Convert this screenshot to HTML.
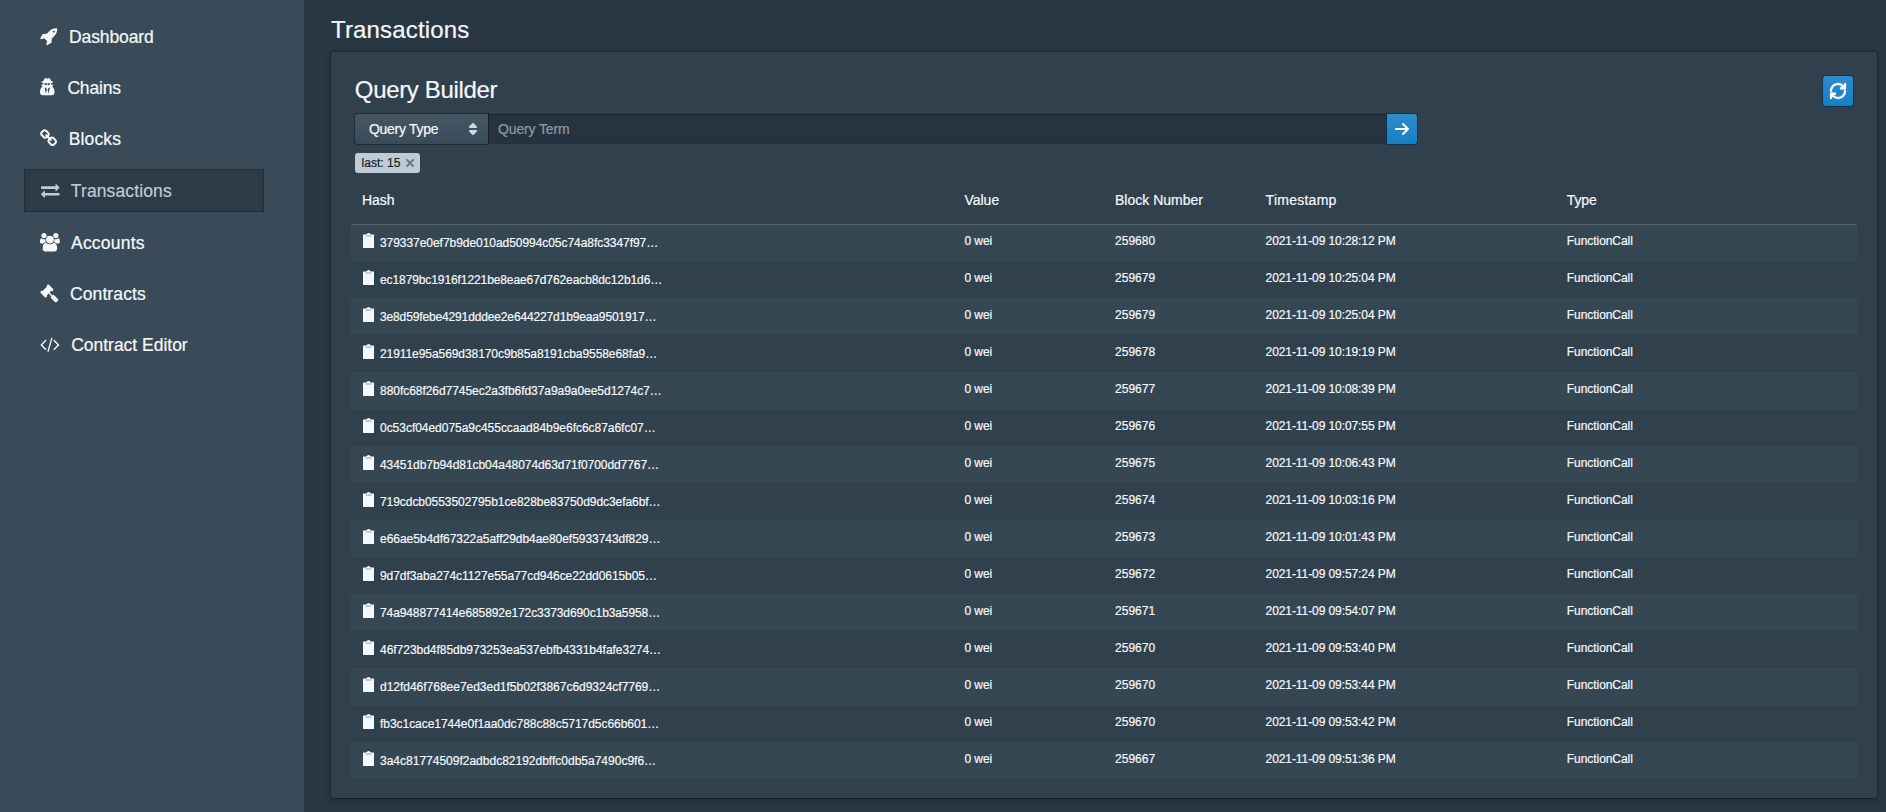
<!DOCTYPE html>
<html lang="en"><head><meta charset="utf-8"><title>Transactions</title>
<style>
*{box-sizing:border-box}
html,body{margin:0;padding:0}
body{width:1886px;height:812px;overflow:hidden;background:#293742;color:#f5f8fa;font-family:"Liberation Sans",sans-serif;font-size:14px;position:relative;-webkit-text-stroke-width:.2px}
.t{position:absolute;white-space:nowrap;display:block}
.ic{position:absolute;display:block;overflow:visible}
#side{position:absolute;left:0;top:0;width:304px;height:812px;background:#394b59}
.nav{font-size:17.5px;line-height:20px}
#active{position:absolute;left:24px;top:169px;width:240px;height:43px;background:rgba(16,22,26,.3);border:1px solid rgba(16,22,26,.35)}
h1{margin:0;font-weight:400;font-size:24px;line-height:28px}
#card{position:absolute;left:331px;top:52px;width:1546px;height:746px;background:#30404d;border-radius:3px;box-shadow:0 0 0 1px rgba(16,22,26,.32),0 1px 1px rgba(16,22,26,.3),0 2px 6px rgba(16,22,26,.35)}
#sel{position:absolute;left:24px;top:62px;width:133px;height:30px;border-radius:3px 0 0 3px;background:#394b59 linear-gradient(to bottom,rgba(255,255,255,.07),rgba(255,255,255,0));box-shadow:0 0 0 1px rgba(16,22,26,.45);font-size:14px;line-height:30px}
#inp{position:absolute;left:157px;top:62px;width:899px;height:30px;background:rgba(16,22,26,.27);box-shadow:inset 0 1px 1px rgba(16,22,26,.4),inset 0 0 0 1px rgba(16,22,26,.15);color:#8a9ba8;font-size:14px;line-height:30px}
.btn{position:absolute;width:30px;height:30px;background:#167fc5 linear-gradient(to bottom,rgba(255,255,255,.1),rgba(255,255,255,0));box-shadow:0 0 0 1px #10344f}
#go{left:1056px;top:62px;border-radius:0 3px 3px 0}
#ref{left:1492px;top:24px;border-radius:3px}
#tag{position:absolute;left:24px;top:101px;width:65px;height:20px;border-radius:3px;background:#bfccd6;color:#182026;font-size:12px;line-height:20px}
table{position:absolute;left:20px;top:132px;width:1506px;border-collapse:collapse;border-spacing:0;table-layout:fixed}
th{height:40px;padding:0 11px;text-align:left;font-weight:400;font-size:14px;line-height:18px;vertical-align:top;padding-top:7px;color:#f5f8fa}
td{height:37px;padding:10px 11px 12px 11px;font-size:12px;line-height:15px;vertical-align:top;white-space:nowrap;overflow:hidden;color:#f5f8fa}
tbody tr:nth-child(odd) td{background:rgba(92,112,128,.15)}
tbody tr:first-child td{box-shadow:inset 0 1px 0 0 rgba(255,255,255,.15)}
td span,th span{position:relative;top:0px}
td.h{position:relative;padding-left:29px}
td.h span{top:2px}
.clip{position:absolute;left:12.1px;top:9.4px}
</style></head><body>
<div id="side">
<div id="active"></div>
<svg class="ic" style="left:40px;top:27.4px" width="17.179" height="18.5" viewBox="0 -1536 1664 1792"><path fill="#f5f8fa" transform="scale(1,-1)" d="M1412.0 1020.0Q1440 1048 1440.0 1088.0Q1440 1128 1412.0 1156.0Q1384 1184 1344.0 1184.0Q1304 1184 1276.0 1156.0Q1248 1128 1248.0 1088.0Q1248 1048 1276.0 1020.0Q1304 992 1344.0 992.0Q1384 992 1412.0 1020.0ZM1664 1376Q1664 1127 1588.5 945.5Q1513 764 1335 585Q1254 505 1140 409L1120 30Q1118 14 1104 4L720 -220Q713 -224 704 -224Q692 -224 681 -215L617 -151Q604 -137 609 -119L694 157L413 438L137 353Q134 352 128 352Q114 352 105 361L41 425Q24 444 36 464L260 848Q270 862 286 864L665 884Q761 998 841 1079Q1029 1266 1199.0 1337.0Q1369 1408 1630 1408Q1644 1408 1654.0 1398.5Q1664 1389 1664 1376Z"/></svg>
<span class="t nav" style="left:69.0px;top:26.94px;color:#f5f8fa;letter-spacing:-0.108px">Dashboard</span>
<svg class="ic" style="left:40px;top:78.3px" width="15.857" height="18.5" viewBox="0 -1536 1536 1792"><path fill="#f5f8fa" transform="scale(1,-1)" d="M576 0 672 448 576 576 448 640ZM832 0 960 640 832 576 736 448ZM992 1010Q990 1014 988 1016Q978 1024 892 1024Q822 1024 725 1005Q718 1003 704.0 1003.0Q690 1003 683 1005Q586 1024 516 1024Q430 1024 420 1016Q418 1014 416 1010Q418 992 420 983Q422 980 427.5 976.5Q433 973 435 966Q437 962 442.5 945.5Q448 929 449.5 925.0Q451 921 457.0 908.0Q463 895 465.5 891.0Q468 887 474.5 877.0Q481 867 486.5 863.5Q492 860 500.5 854.0Q509 848 518.0 846.0Q527 844 538.5 842.0Q550 840 563 840Q599 840 622.0 852.5Q645 865 654.5 882.5Q664 900 669.0 917.0Q674 934 680.5 946.5Q687 959 698 959H710Q721 959 727.5 946.5Q734 934 739.0 917.0Q744 900 753.5 882.5Q763 865 786.0 852.5Q809 840 845 840Q858 840 869.5 842.0Q881 844 890.0 846.0Q899 848 907.5 854.0Q916 860 921.5 863.5Q927 867 933.5 877.0Q940 887 942.5 891.0Q945 895 951.0 908.0Q957 921 958.5 925.0Q960 929 965.5 945.5Q971 962 973 966Q975 973 980.5 976.5Q986 980 988 983Q990 992 992 1010ZM1408 131Q1408 10 1335.0 -59.0Q1262 -128 1141 -128H267Q146 -128 73.0 -59.0Q0 10 0 131Q0 192 4.5 249.0Q9 306 23.5 374.5Q38 443 61.0 498.0Q84 553 124.5 601.5Q165 650 218 676L128 896H342Q320 960 320 1024Q320 1036 322 1056Q128 1096 128 1152Q128 1209 338 1251Q355 1313 389.5 1385.0Q424 1457 460 1499Q492 1536 536 1536Q566 1536 620.0 1505.0Q674 1474 704.0 1474.0Q734 1474 788.0 1505.0Q842 1536 872 1536Q916 1536 948 1499Q984 1457 1018.5 1385.0Q1053 1313 1070 1251Q1280 1209 1280 1152Q1280 1096 1086 1056Q1093 975 1066 896H1280L1198 671Q1261 638 1305.5 574.5Q1350 511 1371.0 431.0Q1392 351 1400.0 279.5Q1408 208 1408 131Z"/></svg>
<span class="t nav" style="left:67.4px;top:77.84px;color:#f5f8fa;letter-spacing:-0.162px">Chains</span>
<svg class="ic" style="left:40px;top:129.2px" width="17.179" height="18.5" viewBox="0 -1536 1664 1792"><path fill="#f5f8fa" transform="scale(1,-1)" d="M1456 320Q1456 360 1428 388L1220 596Q1192 624 1152 624Q1110 624 1080 592Q1083 589 1099.0 573.5Q1115 558 1120.5 552.0Q1126 546 1135.5 533.0Q1145 520 1148.5 507.5Q1152 495 1152 480Q1152 440 1124.0 412.0Q1096 384 1056 384Q1041 384 1028.5 387.5Q1016 391 1003.0 400.5Q990 410 984.0 415.5Q978 421 962.5 437.0Q947 453 944 456Q911 425 911 383Q911 343 939 315L1145 108Q1172 81 1213 81Q1253 81 1281 107L1428 253Q1456 281 1456 320ZM753 1025Q753 1065 725 1093L519 1300Q491 1328 451 1328Q412 1328 383 1301L236 1155Q208 1127 208 1088Q208 1048 236 1020L444 812Q471 785 512 785Q554 785 584 816Q581 819 565.0 834.5Q549 850 543.5 856.0Q538 862 528.5 875.0Q519 888 515.5 900.5Q512 913 512 928Q512 968 540.0 996.0Q568 1024 608 1024Q623 1024 635.5 1020.5Q648 1017 661.0 1007.5Q674 998 680.0 992.5Q686 987 701.5 971.0Q717 955 720 952Q753 983 753 1025ZM1563 117 1416 -29Q1333 -112 1213 -112Q1092 -112 1009 -27L803 180Q720 263 720 383Q720 506 808 592L720 680Q634 592 512 592Q392 592 308 676L100 884Q16 968 16.0 1088.0Q16 1208 101 1291L248 1437Q331 1520 451 1520Q572 1520 655 1435L861 1228Q944 1145 944 1025Q944 902 856 816L944 728Q1030 816 1152 816Q1272 816 1356 732L1564 524Q1648 440 1648.0 320.0Q1648 200 1563 117Z"/></svg>
<span class="t nav" style="left:68.8px;top:128.74px;color:#f5f8fa;letter-spacing:0.110px">Blocks</span>
<svg class="ic" style="left:41px;top:181.1px" width="18.500" height="18.5" viewBox="0 -1536 1792 1792"><path fill="#bfccd6" transform="scale(1,-1)" d="M1792 352V160Q1792 147 1782.5 137.5Q1773 128 1760 128H384V-64Q384 -77 374.5 -86.5Q365 -96 352 -96Q340 -96 328 -86L9 234Q0 243 0 256Q0 270 9 279L329 599Q338 608 352 608Q365 608 374.5 598.5Q384 589 384 576V384H1760Q1773 384 1782.5 374.5Q1792 365 1792 352ZM1783 873 1463 553Q1454 544 1440 544Q1427 544 1417.5 553.5Q1408 563 1408 576V768H32Q19 768 9.5 777.5Q0 787 0 800V992Q0 1005 9.5 1014.5Q19 1024 32 1024H1408V1216Q1408 1230 1417.0 1239.0Q1426 1248 1440 1248Q1452 1248 1464 1238L1783 919Q1792 910 1792.0 896.0Q1792 882 1783 873Z"/></svg>
<span class="t nav" style="left:70.8px;top:180.64px;color:#bfccd6;letter-spacing:0.118px">Transactions</span>
<svg class="ic" style="left:40px;top:233.0px" width="19.821" height="18.5" viewBox="0 -1536 1920 1792"><path fill="#f5f8fa" transform="scale(1,-1)" d="M593 640Q431 635 328 512H194Q112 512 56.0 552.5Q0 593 0 671Q0 1024 124 1024Q130 1024 167.5 1003.0Q205 982 265.0 960.5Q325 939 384 939Q451 939 517 962Q512 925 512 896Q512 757 593 640ZM1664 3Q1664 -117 1591.0 -186.5Q1518 -256 1397 -256H523Q402 -256 329.0 -186.5Q256 -117 256 3Q256 56 259.5 106.5Q263 157 273.5 215.5Q284 274 300.0 324.0Q316 374 343.0 421.5Q370 469 405.0 502.5Q440 536 490.5 556.0Q541 576 602 576Q612 576 645.0 554.5Q678 533 718.0 506.5Q758 480 825.0 458.5Q892 437 960.0 437.0Q1028 437 1095.0 458.5Q1162 480 1202.0 506.5Q1242 533 1275.0 554.5Q1308 576 1318 576Q1379 576 1429.5 556.0Q1480 536 1515.0 502.5Q1550 469 1577.0 421.5Q1604 374 1620.0 324.0Q1636 274 1646.5 215.5Q1657 157 1660.5 106.5Q1664 56 1664 3ZM565.0 1461.0Q640 1386 640.0 1280.0Q640 1174 565.0 1099.0Q490 1024 384.0 1024.0Q278 1024 203.0 1099.0Q128 1174 128.0 1280.0Q128 1386 203.0 1461.0Q278 1536 384.0 1536.0Q490 1536 565.0 1461.0ZM1231.5 1167.5Q1344 1055 1344.0 896.0Q1344 737 1231.5 624.5Q1119 512 960.0 512.0Q801 512 688.5 624.5Q576 737 576.0 896.0Q576 1055 688.5 1167.5Q801 1280 960.0 1280.0Q1119 1280 1231.5 1167.5ZM1920 671Q1920 593 1864.0 552.5Q1808 512 1726 512H1592Q1489 635 1327 640Q1408 757 1408 896Q1408 925 1403 962Q1469 939 1536 939Q1595 939 1655.0 960.5Q1715 982 1752.5 1003.0Q1790 1024 1796 1024Q1920 1024 1920 671ZM1717.0 1461.0Q1792 1386 1792.0 1280.0Q1792 1174 1717.0 1099.0Q1642 1024 1536.0 1024.0Q1430 1024 1355.0 1099.0Q1280 1174 1280.0 1280.0Q1280 1386 1355.0 1461.0Q1430 1536 1536.0 1536.0Q1642 1536 1717.0 1461.0Z"/></svg>
<span class="t nav" style="left:71.0px;top:232.54px;color:#f5f8fa;letter-spacing:0.225px">Accounts</span>
<svg class="ic" style="left:40px;top:284.3px" width="18.500" height="18.5" viewBox="0 -1536 1792 1792"><path fill="#f5f8fa" transform="scale(1,-1)" d="M1771 0Q1771 -53 1734 -90L1627 -198Q1588 -235 1536 -235Q1483 -235 1446 -198L1083 166Q1045 202 1045 256Q1045 309 1088 352L832 608L706 482Q692 468 672.0 468.0Q652 468 638 482Q640 480 650.5 470.0Q661 460 663.0 457.0Q665 454 673.0 445.5Q681 437 683.0 432.0Q685 427 689.0 418.5Q693 410 694.5 402.0Q696 394 696 384Q696 346 668 316Q665 313 651.5 298.0Q638 283 632.5 277.5Q627 272 614.0 261.0Q601 250 592.0 245.5Q583 241 570.0 236.5Q557 232 544 232Q504 232 476 260L68 668Q40 696 40 736Q40 749 44.5 762.0Q49 775 53.5 784.0Q58 793 69.0 806.0Q80 819 85.5 824.5Q91 830 106.0 843.5Q121 857 124 860Q154 888 192 888Q202 888 210.0 886.5Q218 885 226.5 881.0Q235 877 240.0 875.0Q245 873 253.5 865.0Q262 857 265.0 855.0Q268 853 278.0 842.5Q288 832 290 830Q276 844 276.0 864.0Q276 884 290 898L638 1246Q652 1260 672.0 1260.0Q692 1260 706 1246Q704 1248 693.5 1258.0Q683 1268 681.0 1271.0Q679 1274 671.0 1282.5Q663 1291 661.0 1296.0Q659 1301 655.0 1309.5Q651 1318 649.5 1326.0Q648 1334 648 1344Q648 1382 676 1412Q679 1415 692.5 1430.0Q706 1445 711.5 1450.5Q717 1456 730.0 1467.0Q743 1478 752.0 1482.5Q761 1487 774.0 1491.5Q787 1496 800 1496Q840 1496 868 1468L1276 1060Q1304 1032 1304 992Q1304 979 1299.5 966.0Q1295 953 1290.5 944.0Q1286 935 1275.0 922.0Q1264 909 1258.5 903.5Q1253 898 1238.0 884.5Q1223 871 1220 868Q1190 840 1152 840Q1142 840 1134.0 841.5Q1126 843 1117.5 847.0Q1109 851 1104.0 853.0Q1099 855 1090.5 863.0Q1082 871 1079.0 873.0Q1076 875 1066.0 885.5Q1056 896 1054 898Q1068 884 1068.0 864.0Q1068 844 1054 830L928 704L1184 448Q1227 491 1280 491Q1332 491 1371 454L1734 91Q1771 52 1771 0Z"/></svg>
<span class="t nav" style="left:70.0px;top:283.84px;color:#f5f8fa;letter-spacing:0.100px">Contracts</span>
<svg class="ic" style="left:40px;top:335.2px" width="19.821" height="18.5" viewBox="0 -1536 1920 1792"><path fill="#f5f8fa" transform="scale(1,-1)" d="M617 137 567 87Q557 77 544.0 77.0Q531 77 521 87L55 553Q45 563 45.0 576.0Q45 589 55 599L521 1065Q531 1075 544.0 1075.0Q557 1075 567 1065L617 1015Q627 1005 627.0 992.0Q627 979 617 969L224 576L617 183Q627 173 627.0 160.0Q627 147 617 137ZM1208 1204 835 -87Q831 -100 819.5 -106.5Q808 -113 796 -109L734 -92Q721 -88 714.5 -76.5Q708 -65 712 -52L1085 1239Q1089 1252 1100.5 1258.5Q1112 1265 1124 1261L1186 1244Q1199 1240 1205.5 1228.5Q1212 1217 1208 1204ZM1865 553 1399 87Q1389 77 1376.0 77.0Q1363 77 1353 87L1303 137Q1293 147 1293.0 160.0Q1293 173 1303 183L1696 576L1303 969Q1293 979 1293.0 992.0Q1293 1005 1303 1015L1353 1065Q1363 1075 1376.0 1075.0Q1389 1075 1399 1065L1865 599Q1875 589 1875.0 576.0Q1875 563 1865 553Z"/></svg>
<span class="t nav" style="left:71.2px;top:334.74px;color:#f5f8fa;letter-spacing:-0.016px">Contract Editor</span>
</div>
<h1 class="t" style="left:331px;top:16.28px;letter-spacing:0.161px">Transactions</h1>
<div id="card">
<h1 class="t" style="left:23.80000000000001px;top:24.18px;letter-spacing:-0.335px">Query Builder</h1>
<div id="ref" class="btn"><svg class="ic" style="left:7px;top:7px" width="16" height="16" viewBox="0 0 16 16"><path fill="#fff" stroke="#fff" stroke-width=".3" d="M14.99 6.990c-.55 0-1 .45-1 1 0 3.310-2.690 6-6 6-1.770 0-3.360-.78-4.460-2h1.460c.55 0 1-.45 1-1s-.45-1-1-1h-4c-.55 0-1 .45-1 1v4c0 .55.45 1 1 1s1-.45 1-1v-1.740a7.950 7.950 0 0 0 6 2.740c4.420 0 8-3.580 8-8 0-.55-.45-1-1-1zm0-7c-.55 0-1 .45-1 1v1.740a7.950 7.950 0 0 0-6-2.740c-4.420 0-8 3.580-8 8 0 .55.45 1 1 1s1-.45 1-1c0-3.310 2.690-6 6-6 1.770 0 3.360.78 4.460 2h-1.460c-.55 0-1 .45-1 1s.45 1 1 1h4c.55 0 1-.45 1-1v-4c0-.55-.45-1-1-1z"/><path fill="#fff" d="M15.800.4V6.500H9.700ZM.2 15.600V9.500H6.300Z"/></svg></div>
<div id="sel"><span class="t" style="left:14px;top:0;letter-spacing:-0.288px">Query Type</span><svg class="ic" style="left:110px;top:7px" width="16" height="16" viewBox="0 0 16 16"><path fill="#ced9e0" d="M5 7h6a1.003 1.003 0 0 0 .71-1.710l-3-3C8.530 2.110 8.280 2 8 2s-.53.11-.71.290l-3 3A1.003 1.003 0 0 0 5 7zm6 2H5a1.003 1.003 0 0 0-.71 1.710l3 3c.18.180.43.290.71.290s.53-.11.71-.290l3-3A1.003 1.003 0 0 0 11 9z"/></svg></div>
<div id="inp"><span class="t" style="left:10px;top:0;letter-spacing:-0.129px">Query Term</span></div>
<div id="go" class="btn"><svg class="ic" style="left:7px;top:7px" width="16" height="16" viewBox="0 0 16 16"><path fill="#fff" d="M14.700 7.290l-5-5a.965.965 0 0 0-.71-.3 1.003 1.003 0 0 0-.71 1.710l3.300 3.290H1.990c-.55 0-1 .45-1 1s.45 1 1 1h9.590l-3.290 3.290a1.003 1.003 0 0 0 1.420 1.420l5-5c.18-.18.29-.43.29-.71s-.12-.52-.3-.7z"/></svg></div>
<div id="tag"><span class="t" style="left:6.5px;top:0;letter-spacing:0.031px">last: 15</span><svg class="ic" style="left:47px;top:2px" width="16" height="16" viewBox="0 0 16 16"><path fill="#687b8a" d="M9.410 8l2.290-2.290c.19-.18.3-.43.3-.71a1.003 1.003 0 0 0-1.710-.71L8 6.590l-2.290-2.300a1.003 1.003 0 0 0-1.420 1.420L6.590 8 4.300 10.290c-.19.180-.3.430-.3.710a1.003 1.003 0 0 0 1.710.71L8 9.410l2.290 2.290c.18.190.43.3.71.300a1.003 1.003 0 0 0 .71-1.710L9.410 8z"/></svg></div>
<table><colgroup><col style="width:40%"><col style="width:10%"><col style="width:10%"><col style="width:20%"><col style="width:20%"></colgroup>
<thead><tr><th><span style="letter-spacing:-0.036px">Hash</span></th><th><span style="letter-spacing:-0.001px">Value</span></th><th><span style="letter-spacing:0.008px">Block Number</span></th><th><span style="letter-spacing:0.256px">Timestamp</span></th><th><span style="letter-spacing:-0.145px">Type</span></th></tr></thead>
<tbody>
<tr><td class="h"><svg class="clip" width="11.1" height="14.9" viewBox="0 0 11.1 14.9"><path fill="#f5f8fa" fill-rule="evenodd" d="M.6 1.500H3.100L4.700.25Q5.550-.15 6.400.25L8 1.500H10.500Q11.100 1.500 11.100 2.100V14.300Q11.100 14.900 10.500 14.900H.6Q0 14.900 0 14.300V2.100Q0 1.500.6 1.500ZM2.600 2.700H8.500V3.200H2.600Z"/></svg><span style="letter-spacing:-0.050px">379337e0ef7b9de010ad50994c05c74a8fc3347f97…</span></td><td><span style="letter-spacing:-0.038px">0 wei</span></td><td><span style="letter-spacing:0.023px">259680</span></td><td><span style="letter-spacing:-0.087px">2021-11-09 10:28:12 PM</span></td><td><span style="letter-spacing:-0.054px">FunctionCall</span></td></tr>
<tr><td class="h"><svg class="clip" width="11.1" height="14.9" viewBox="0 0 11.1 14.9"><path fill="#f5f8fa" fill-rule="evenodd" d="M.6 1.500H3.100L4.700.25Q5.550-.15 6.400.25L8 1.500H10.500Q11.100 1.500 11.100 2.100V14.300Q11.100 14.900 10.500 14.900H.6Q0 14.900 0 14.300V2.100Q0 1.500.6 1.500ZM2.600 2.700H8.500V3.200H2.600Z"/></svg><span style="letter-spacing:-0.096px">ec1879bc1916f1221be8eae67d762eacb8dc12b1d6…</span></td><td><span style="letter-spacing:-0.038px">0 wei</span></td><td><span style="letter-spacing:0.023px">259679</span></td><td><span style="letter-spacing:-0.087px">2021-11-09 10:25:04 PM</span></td><td><span style="letter-spacing:-0.054px">FunctionCall</span></td></tr>
<tr><td class="h"><svg class="clip" width="11.1" height="14.9" viewBox="0 0 11.1 14.9"><path fill="#f5f8fa" fill-rule="evenodd" d="M.6 1.500H3.100L4.700.25Q5.550-.15 6.400.25L8 1.500H10.500Q11.100 1.500 11.100 2.100V14.300Q11.100 14.900 10.500 14.900H.6Q0 14.900 0 14.300V2.100Q0 1.500.6 1.500ZM2.600 2.700H8.500V3.200H2.600Z"/></svg><span style="letter-spacing:-0.139px">3e8d59febe4291dddee2e644227d1b9eaa9501917…</span></td><td><span style="letter-spacing:-0.038px">0 wei</span></td><td><span style="letter-spacing:0.023px">259679</span></td><td><span style="letter-spacing:-0.087px">2021-11-09 10:25:04 PM</span></td><td><span style="letter-spacing:-0.054px">FunctionCall</span></td></tr>
<tr><td class="h"><svg class="clip" width="11.1" height="14.9" viewBox="0 0 11.1 14.9"><path fill="#f5f8fa" fill-rule="evenodd" d="M.6 1.500H3.100L4.700.25Q5.550-.15 6.400.25L8 1.500H10.500Q11.100 1.500 11.100 2.100V14.300Q11.100 14.900 10.500 14.900H.6Q0 14.900 0 14.300V2.100Q0 1.500.6 1.500ZM2.600 2.700H8.500V3.200H2.600Z"/></svg><span style="letter-spacing:-0.071px">21911e95a569d38170c9b85a8191cba9558e68fa9…</span></td><td><span style="letter-spacing:-0.038px">0 wei</span></td><td><span style="letter-spacing:0.023px">259678</span></td><td><span style="letter-spacing:-0.087px">2021-11-09 10:19:19 PM</span></td><td><span style="letter-spacing:-0.054px">FunctionCall</span></td></tr>
<tr><td class="h"><svg class="clip" width="11.1" height="14.9" viewBox="0 0 11.1 14.9"><path fill="#f5f8fa" fill-rule="evenodd" d="M.6 1.500H3.100L4.700.25Q5.550-.15 6.400.25L8 1.500H10.500Q11.100 1.500 11.100 2.100V14.300Q11.100 14.900 10.500 14.900H.6Q0 14.900 0 14.300V2.100Q0 1.500.6 1.500ZM2.600 2.700H8.500V3.200H2.600Z"/></svg><span style="letter-spacing:-0.043px">880fc68f26d7745ec2a3fb6fd37a9a9a0ee5d1274c7…</span></td><td><span style="letter-spacing:-0.038px">0 wei</span></td><td><span style="letter-spacing:0.023px">259677</span></td><td><span style="letter-spacing:-0.087px">2021-11-09 10:08:39 PM</span></td><td><span style="letter-spacing:-0.054px">FunctionCall</span></td></tr>
<tr><td class="h"><svg class="clip" width="11.1" height="14.9" viewBox="0 0 11.1 14.9"><path fill="#f5f8fa" fill-rule="evenodd" d="M.6 1.500H3.100L4.700.25Q5.550-.15 6.400.25L8 1.500H10.500Q11.100 1.500 11.100 2.100V14.300Q11.100 14.900 10.500 14.900H.6Q0 14.900 0 14.300V2.100Q0 1.500.6 1.500ZM2.600 2.700H8.500V3.200H2.600Z"/></svg><span style="letter-spacing:-0.029px">0c53cf04ed075a9c455ccaad84b9e6fc6c87a6fc07…</span></td><td><span style="letter-spacing:-0.038px">0 wei</span></td><td><span style="letter-spacing:0.023px">259676</span></td><td><span style="letter-spacing:-0.087px">2021-11-09 10:07:55 PM</span></td><td><span style="letter-spacing:-0.054px">FunctionCall</span></td></tr>
<tr><td class="h"><svg class="clip" width="11.1" height="14.9" viewBox="0 0 11.1 14.9"><path fill="#f5f8fa" fill-rule="evenodd" d="M.6 1.500H3.100L4.700.25Q5.550-.15 6.400.25L8 1.500H10.500Q11.100 1.500 11.100 2.100V14.300Q11.100 14.900 10.500 14.900H.6Q0 14.900 0 14.300V2.100Q0 1.500.6 1.500ZM2.600 2.700H8.500V3.200H2.600Z"/></svg><span style="letter-spacing:-0.062px">43451db7b94d81cb04a48074d63d71f0700dd7767…</span></td><td><span style="letter-spacing:-0.038px">0 wei</span></td><td><span style="letter-spacing:0.023px">259675</span></td><td><span style="letter-spacing:-0.087px">2021-11-09 10:06:43 PM</span></td><td><span style="letter-spacing:-0.054px">FunctionCall</span></td></tr>
<tr><td class="h"><svg class="clip" width="11.1" height="14.9" viewBox="0 0 11.1 14.9"><path fill="#f5f8fa" fill-rule="evenodd" d="M.6 1.500H3.100L4.700.25Q5.550-.15 6.400.25L8 1.500H10.500Q11.100 1.500 11.100 2.100V14.300Q11.100 14.900 10.500 14.900H.6Q0 14.900 0 14.300V2.100Q0 1.500.6 1.500ZM2.600 2.700H8.500V3.200H2.600Z"/></svg><span style="letter-spacing:-0.055px">719cdcb0553502795b1ce828be83750d9dc3efa6bf…</span></td><td><span style="letter-spacing:-0.038px">0 wei</span></td><td><span style="letter-spacing:0.023px">259674</span></td><td><span style="letter-spacing:-0.087px">2021-11-09 10:03:16 PM</span></td><td><span style="letter-spacing:-0.054px">FunctionCall</span></td></tr>
<tr><td class="h"><svg class="clip" width="11.1" height="14.9" viewBox="0 0 11.1 14.9"><path fill="#f5f8fa" fill-rule="evenodd" d="M.6 1.500H3.100L4.700.25Q5.550-.15 6.400.25L8 1.500H10.500Q11.100 1.500 11.100 2.100V14.300Q11.100 14.900 10.500 14.900H.6Q0 14.900 0 14.300V2.100Q0 1.500.6 1.500ZM2.600 2.700H8.500V3.200H2.600Z"/></svg><span style="letter-spacing:-0.037px">e66ae5b4df67322a5aff29db4ae80ef5933743df829…</span></td><td><span style="letter-spacing:-0.038px">0 wei</span></td><td><span style="letter-spacing:0.023px">259673</span></td><td><span style="letter-spacing:-0.087px">2021-11-09 10:01:43 PM</span></td><td><span style="letter-spacing:-0.054px">FunctionCall</span></td></tr>
<tr><td class="h"><svg class="clip" width="11.1" height="14.9" viewBox="0 0 11.1 14.9"><path fill="#f5f8fa" fill-rule="evenodd" d="M.6 1.500H3.100L4.700.25Q5.550-.15 6.400.25L8 1.500H10.500Q11.100 1.500 11.100 2.100V14.300Q11.100 14.900 10.500 14.900H.6Q0 14.900 0 14.300V2.100Q0 1.500.6 1.500ZM2.600 2.700H8.500V3.200H2.600Z"/></svg><span style="letter-spacing:-0.059px">9d7df3aba274c1127e55a77cd946ce22dd0615b05…</span></td><td><span style="letter-spacing:-0.038px">0 wei</span></td><td><span style="letter-spacing:0.023px">259672</span></td><td><span style="letter-spacing:-0.087px">2021-11-09 09:57:24 PM</span></td><td><span style="letter-spacing:-0.054px">FunctionCall</span></td></tr>
<tr><td class="h"><svg class="clip" width="11.1" height="14.9" viewBox="0 0 11.1 14.9"><path fill="#f5f8fa" fill-rule="evenodd" d="M.6 1.500H3.100L4.700.25Q5.550-.15 6.400.25L8 1.500H10.500Q11.100 1.500 11.100 2.100V14.300Q11.100 14.900 10.500 14.900H.6Q0 14.900 0 14.300V2.100Q0 1.500.6 1.500ZM2.600 2.700H8.500V3.200H2.600Z"/></svg><span style="letter-spacing:-0.101px">74a948877414e685892e172c3373d690c1b3a5958…</span></td><td><span style="letter-spacing:-0.038px">0 wei</span></td><td><span style="letter-spacing:0.023px">259671</span></td><td><span style="letter-spacing:-0.087px">2021-11-09 09:54:07 PM</span></td><td><span style="letter-spacing:-0.054px">FunctionCall</span></td></tr>
<tr><td class="h"><svg class="clip" width="11.1" height="14.9" viewBox="0 0 11.1 14.9"><path fill="#f5f8fa" fill-rule="evenodd" d="M.6 1.500H3.100L4.700.25Q5.550-.15 6.400.25L8 1.500H10.500Q11.100 1.500 11.100 2.100V14.300Q11.100 14.900 10.500 14.900H.6Q0 14.900 0 14.300V2.100Q0 1.500.6 1.500ZM2.600 2.700H8.500V3.200H2.600Z"/></svg><span style="letter-spacing:-0.028px">46f723bd4f85db973253ea537ebfb4331b4fafe3274…</span></td><td><span style="letter-spacing:-0.038px">0 wei</span></td><td><span style="letter-spacing:0.023px">259670</span></td><td><span style="letter-spacing:-0.087px">2021-11-09 09:53:40 PM</span></td><td><span style="letter-spacing:-0.054px">FunctionCall</span></td></tr>
<tr><td class="h"><svg class="clip" width="11.1" height="14.9" viewBox="0 0 11.1 14.9"><path fill="#f5f8fa" fill-rule="evenodd" d="M.6 1.500H3.100L4.700.25Q5.550-.15 6.400.25L8 1.500H10.500Q11.100 1.500 11.100 2.100V14.300Q11.100 14.900 10.500 14.900H.6Q0 14.900 0 14.300V2.100Q0 1.500.6 1.500ZM2.600 2.700H8.500V3.200H2.600Z"/></svg><span style="letter-spacing:-0.015px">d12fd46f768ee7ed3ed1f5b02f3867c6d9324cf7769…</span></td><td><span style="letter-spacing:-0.038px">0 wei</span></td><td><span style="letter-spacing:0.023px">259670</span></td><td><span style="letter-spacing:-0.087px">2021-11-09 09:53:44 PM</span></td><td><span style="letter-spacing:-0.054px">FunctionCall</span></td></tr>
<tr><td class="h"><svg class="clip" width="11.1" height="14.9" viewBox="0 0 11.1 14.9"><path fill="#f5f8fa" fill-rule="evenodd" d="M.6 1.500H3.100L4.700.25Q5.550-.15 6.400.25L8 1.500H10.500Q11.100 1.500 11.100 2.100V14.300Q11.100 14.900 10.500 14.900H.6Q0 14.900 0 14.300V2.100Q0 1.500.6 1.500ZM2.600 2.700H8.500V3.200H2.600Z"/></svg><span style="letter-spacing:-0.041px">fb3c1cace1744e0f1aa0dc788c88c5717d5c66b601…</span></td><td><span style="letter-spacing:-0.038px">0 wei</span></td><td><span style="letter-spacing:0.023px">259670</span></td><td><span style="letter-spacing:-0.087px">2021-11-09 09:53:42 PM</span></td><td><span style="letter-spacing:-0.054px">FunctionCall</span></td></tr>
<tr><td class="h"><svg class="clip" width="11.1" height="14.9" viewBox="0 0 11.1 14.9"><path fill="#f5f8fa" fill-rule="evenodd" d="M.6 1.500H3.100L4.700.25Q5.550-.15 6.400.25L8 1.500H10.500Q11.100 1.500 11.100 2.100V14.300Q11.100 14.900 10.500 14.900H.6Q0 14.900 0 14.300V2.100Q0 1.500.6 1.500ZM2.600 2.700H8.500V3.200H2.600Z"/></svg><span style="letter-spacing:0.001px">3a4c81774509f2adbdc82192dbffc0db5a7490c9f6…</span></td><td><span style="letter-spacing:-0.038px">0 wei</span></td><td><span style="letter-spacing:0.023px">259667</span></td><td><span style="letter-spacing:-0.087px">2021-11-09 09:51:36 PM</span></td><td><span style="letter-spacing:-0.054px">FunctionCall</span></td></tr>
</tbody></table>
</div>
</body></html>
